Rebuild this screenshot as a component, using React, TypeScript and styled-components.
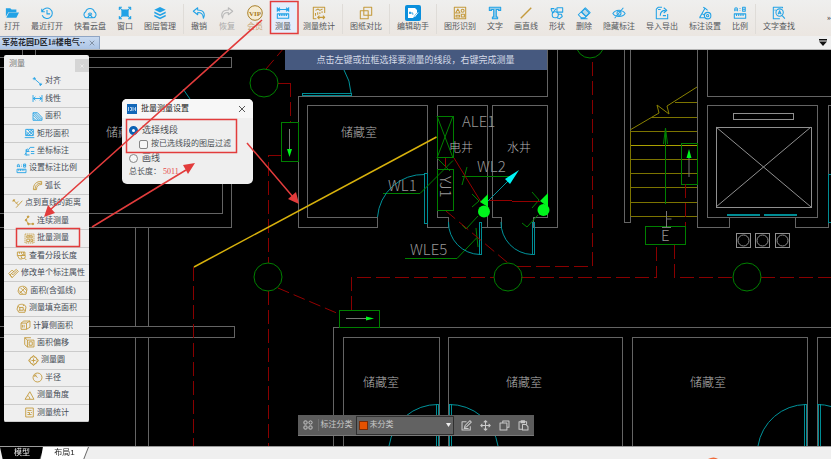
import React from "react";
import styled, { createGlobalStyle } from "styled-components";

const BLUE = "#22a2e6";
const GOLD = "#c49a3c";
const RED = "#e23c3c";

const GlobalStyle = createGlobalStyle`
  * { box-sizing: border-box; }
  body { margin: 0; background: #efefef; overflow: hidden; }
  button, select, input { font: inherit; color: inherit; margin: 0; padding: 0; }
`;

const Page = styled.div`
  position: relative;
  display: flex;
  flex-direction: column;
  min-height: 100vh;
  color: #4c4f55;
  font-family: "Liberation Serif", "Noto Sans CJK SC", sans-serif;
  font-size: 8px;
  line-height: 12px;
`;

/* ---------- icons ---------- */

const glyphs: Record<string, React.ReactNode> = {
  open: (
    <g fill="currentColor" stroke="none">
      <path d="M1 2.500h5L7.500 4H13v3H4L1 12z" />
      <path d="M4.500 7.500H16L13 13.500H1.500z" />
    </g>
  ),
  recent: (
    <>
      <path d="M2.500 6A6 6 0 1 1 2.500 10.500M2 3v3.500h3.500M8 4.500V9h3.500" />
    </>
  ),
  cloud: (
    <>
      <path d="M4.500 13.500A3.700 3.700 0 0 1 3 6.600 5.200 5.200 0 0 1 13 6.600a3.700 3.700 0 0 1-1.500 6.900" />
      <path d="M5 13.500l3-4 3 4zM6 10a2 2 0 0 1 4 0" />
    </>
  ),
  windowFit: (
    <>
      <rect x="4.500" y="4.500" width="7" height="7" fill="currentColor" />
      <path d="M1.500 4.500v-3h3M11.500 1.500h3v3M14.500 11.500v3h-3M4.500 14.500h-3v-3M2 2l3 3M14 2l-3 3M2 14l3-3M14 14l-3-3" />
    </>
  ),
  layers: (
    <g fill="currentColor" stroke="none">
      <path d="M8 1l6.500 3.200L8 7.400 1.500 4.200z" />
      <path d="M1.500 6.200L8 9.400l6.500-3.200v2L8 11.400 1.500 8.200z" />
      <path d="M1.500 10L8 13.200 14.500 10v2L8 15.200 1.500 12z" />
    </g>
  ),
  undo: <path d="M6.500 2L1.500 6l5 4V7.500c4 0 6 1 6.500 6.500 2.500-5 .5-9.500-6.500-9.500z" />,
  redo: <path d="M9.500 2l5 4-5 4V7.500c-4 0-6 1-6.500 6.500C.5 9 2.500 4.500 9.500 4.500z" />,
  measure: (
    <>
      <path d="M1.500 1.500v5M14.500 1.500v5M2 4h12M4.500 2L2 4l2.500 2M11.500 2L14 4l-2.500 2" />
      <path d="M1.500 9h13v5h-13zM4 9v2.500M6 9v2.500M8 9v2.500M10 9v2.500M12 9v2.500" />
    </>
  ),
  stats: (
    <>
      <path d="M5 14.500H1.500v-13h13V8M4 5l3-1.500L9 5l3-1.500M4 11V8M6.500 10V7M9 9V7M11.500 8V6" />
      <path d="M6.500 13h8M8.500 11l-2 2 2 2M12.500 11l2 2-2 2" />
    </>
  ),
  compare: <path d="M5.500 1.500h9v9h-9zM5.500 5.500h-4v9h9v-4M5.500 5.500h5v5" />,
  shapesBox: (
    <>
      <rect x="1.500" y="1.500" width="13" height="13" />
      <path d="M3 8l2.500-4.500L8 8z" />
      <circle cx="11" cy="5.500" r="1.700" />
      <rect x="9.500" y="9.500" width="3.500" height="3" />
      <path d="M3.500 10.500h4v2h-4z" />
    </>
  ),
  text: (
    <path
      fill="currentColor"
      fillOpacity=".45"
      d="M1.500 5V1.500h13V5h-2.500V4H9.500v8.500h1.500v2H5v-2h1.500V4H4v1z"
    />
  ),
  line: <path d="M2 14L14 2" strokeWidth="1.6" />,
  shapes: (
    <>
      <path d="M1 3l2 5 4-5M1 3h4M8 2h6.500v5H8z" />
      <circle cx="6" cy="10" r="3.500" />
      <path d="M9 9.500h4l1 2.500-3 2.500-3-1" />
    </>
  ),
  erase: (
    <>
      <path d="M9.500 2L15 7.500 9 13.500H5L1.500 10zM5 6.500l5.500 5.500M4 14.500h8" />
      <path d="M5 7l4-4 5 5-4 4z" fill="currentColor" fillOpacity=".25" />
    </>
  ),
  hide: (
    <>
      <path d="M1 8.500C4 3.500 12 3.500 15 8.500 12 13 4 13 1 8.500zM13 2L3 14" />
      <circle cx="8" cy="8.300" r="2.300" />
    </>
  ),
  transfer: (
    <>
      <path d="M8 1.500H3.500l-2 2v11h13V9M3.500 4h3" />
      <path d="M6 11c0-4 2-6 6-6M10 2l3.500 3L10 8M9 11h3.500" />
    </>
  ),
  annotate: (
    <>
      <path d="M1.500 13.500h6M2 13L8 2.500 11 5M5 9l3 2M8 2.500L6 1.500" />
      <circle cx="11" cy="11" r="3.700" />
      <circle cx="11" cy="11" r="1.300" />
    </>
  ),
  ratio: (
    <>
      <path d="M2 6V3.500a1.500 1.500 0 0 1 3 0V6M2 4.500h3M8 2.500v.8M8 5v.8M11 1.500h3V6h-3zM11 3.700h3" />
      <path d="M1.500 9h13v5h-13zM4 9v2.500M6.500 9v2.500M9 9v2.500M11.500 9v2.500" />
    </>
  ),
  find: (
    <>
      <path d="M12 2.500v-1H1.500v13H9M3.500 4v1.500" />
      <circle cx="8.700" cy="7.500" r="4.200" />
      <path d="M11.700 11l3 3.500M7 9.500l1.700-4 1.700 4M7.500 8.300h2.400" />
    </>
  ),
  aligned: (
    <>
      <path d="M3 3.500l10 9M1 4.500L4 1.500M11.500 14.500l3-3" />
      <path d="M3 6V3.500h2.500M10.500 12.500H13V10" />
    </>
  ),
  linear: <path d="M1.500 3v10M14.500 3v10M2 8h12M5 5.500L2 8l3 2.500M11 5.500L14 8l-3 2.500" />,
  area: <path d="M1.500 2.500H8l6.500 7v4h-13zM2 6l7 7M2 10l3 3M5 3l9 9M2 3l10 10" />,
  rectArea: <path d="M2.500 2h11v9h-11zM1 14h14M3 5l6 6M3 8l3 3M5 2l8 8M9 2l4 4M3 11l9-9M7 11l6-6" />,
  coord: (
    <>
      <path d="M9 2h6M7 5l2-3M3 5v9M3 8h5M3 13h5M10 8h5M10 11h5M1 13l2-3" />
      <circle cx="5" cy="6" r="1.500" />
    </>
  ),
  arc: <path d="M2 14C2 6 6 2 14 2v4.500C9 6.500 6.500 9 6.500 14zM4.500 14C4.500 7.500 8 4.500 14 4.500" />,
  pointLine: (
    <>
      <path d="M6 14L15 4M2 3l7 7M1 5l3-3" />
      <circle cx="2.500" cy="3.500" r="1" />
      <path d="M6 8l3-3" />
    </>
  ),
  chain: (
    <>
      <path d="M6 2L3 7l3 6h7" />
      <g fill="currentColor">
        <circle cx="6" cy="2.500" r="1.200" />
        <circle cx="3" cy="7.500" r="1.200" />
        <circle cx="6.500" cy="13" r="1.200" />
        <circle cx="13" cy="13" r="1.200" />
      </g>
    </>
  ),
  batch: (
    <>
      <path d="M1.500 1.500h13v13h-13z" strokeDasharray="2 1" />
      <path d="M4 4h8v3H4zM4 9h4v3.500H4zM10 9h2.500v3.500H10zM6 4v1.500M8 4v1.500M10 4v1.500" />
    </>
  ),
  segment: (
    <>
      <path d="M2 3h11v5H2zM5 3v2.500M8 3v2.500M11 3v2.500M2 8l3 5h4" />
      <circle cx="10.500" cy="9.500" r="3" />
      <path d="M12.500 12l2.500 2.500" />
    </>
  ),
  edit: <path d="M1 8l5-5 3 3M3 10l3 4 9-9-3-3zM1 8l5 6M5 8l2 2 6-6" />,
  arcArea: <path d="M3 3.500C7 1 13 1 14.500 6L13 13.500H4L1.500 9zM3 8l5 5M5 4l8 8M9 3l5 5M4 12l9-9" />,
  fillArea: (
    <>
      <path d="M3 3.500C7 1 13 1 14.500 6L13 13.500H4L1.500 9z" />
      <path d="M5.500 6.500h5v4h-5zM3 5l3 2M10 4l2-1M11 10l3 1M4 11l2-1" />
    </>
  ),
  side: <path d="M1.500 4.500h8v9h-8zM1.500 4.500l4-3h9l-5 3M14.500 1.500v9l-5 3M3.500 7v4M6 7v4" />,
  offset: (
    <>
      <path d="M5 4.500h9.500v10H5zM7.500 7h4.500v5H7.500z" />
      <path d="M1 1l4 3.500M1 1v10l4 3.500M1 1h9" />
    </>
  ),
  circleM: (
    <>
      <circle cx="8" cy="8" r="5.500" />
      <path d="M8 .5l3 3M8 .5l-3 3M8 15.500l3-3M8 15.500l-3-3M.5 8l3-3M.5 8l3 3M15.500 8l-3-3M15.500 8l-3 3M5 8h6M8 5v6" />
    </>
  ),
  radius: (
    <>
      <circle cx="8" cy="8" r="6.500" />
      <path d="M8 8L4 4.500M4 7V4.500h2.500" />
    </>
  ),
  angle: <path d="M1.500 13.500L8.500 2.500l6 11zM5 8.500c2 0 3.500 2 3.500 5" />,
  report: <path d="M2.500 1.500h11v13h-11zM5 5h6M5 8h3M10 8h1.500M5 11h6M8 8v3" />,
  grid: (
    <>
      <rect x="1.500" y="1.500" width="5" height="5" rx="1.500" />
      <circle cx="12" cy="4" r="2.600" />
      <rect x="1.500" y="9.500" width="5" height="5" rx="1.500" />
      <rect x="9.500" y="9.500" width="5" height="5" rx="1.500" />
    </>
  ),
  pen: <path d="M8 2.500H1.500v12h12V9M5 11l1-3 7-7 2 2-7 7zM4 12.500h7" />,
  move: <path d="M8 1v14M1 8h14M5.500 3.500L8 1l2.500 2.500M5.500 12.500L8 15l2.500-2.500M3.500 5.500L1 8l2.500 2.500M12.500 5.500L15 8l-2.500 2.500" />,
  copy: <path d="M5.500 4.500v-3h9v9h-3M1.500 4.500h10v10h-10z" />,
  paste: <path d="M6 13.500H1.500v-11h11V6M4.500 1h5v3h-5zM6.500 6.500h5l3 3v5h-8z" />,
  close: <path d="M2 2l12 12M14 2L2 14" />,
};

function Icon({ name, size = 14, weight = 1.2 }: { name: string; size?: number; weight?: number }) {
  return (
    <svg
      width={size}
      height={size}
      viewBox="0 0 16 16"
      fill="none"
      stroke="currentColor"
      strokeWidth={weight}
      strokeLinejoin="round"
      aria-hidden="true"
    >
      {glyphs[name]}
    </svg>
  );
}

/* ---------- top toolbar ---------- */

const Toolbar = styled.header`
  display: flex;
  align-items: stretch;
  height: 36px;
  padding-left: 4px;
  background: linear-gradient(#efefee, #ebe6e1);
  white-space: nowrap;
`;

const Group = styled.div<{ $gap: number }>`
  display: flex;
  gap: ${(p) => p.$gap}px;
`;

const Separator = styled.span`
  width: 1px;
  margin: 4px 7px 2px;
  background: #dfdcd8;
`;

const ToolButton = styled.button<{ $active?: boolean; $ink?: string }>`
  display: flex;
  flex-direction: column;
  align-items: center;
  justify-content: flex-end;
  height: 34px;
  padding: 0 5px 1px;
  margin: 0 -5px;
  border: 0;
  color: ${(p) => p.$ink || "#55585c"};
  background: ${(p) => (p.$active ? "#e4edfb" : "transparent")};
`;

const IconSlot = styled.span<{ $ink: string }>`
  display: flex;
  align-items: center;
  justify-content: center;
  height: 16px;
  color: ${(p) => p.$ink};
`;

const Overflow = styled.button`
  margin-left: auto;
  border: 0;
  background: none;
  color: #333;
`;

const Vip = () => (
  <svg width="16" height="16" viewBox="0 0 16 16" aria-hidden="true">
    <circle cx="8" cy="8" r="7.300" fill="#f5ecd4" stroke="#a9802a" strokeWidth="1" />
    <text x="8" y="11" textAnchor="middle" fontSize="7" fontWeight="700" fill="#a87a1c">VIP</text>
  </svg>
);

const Assistant = () => (
  <svg width="16" height="16" viewBox="0 0 16 16" aria-hidden="true">
    <rect width="16" height="16" rx="2" fill="#0b8fdc" />
    <path d="M3 3h7l2 2v3l-4 5H3z" fill="#fff" />
    <path d="M4.500 9V7h1v2M7 7v2h1.500M9 12l4-5 1 1-4 5z" fill="none" stroke="#0b8fdc" strokeWidth=".8" />
    <path d="M9.500 12l3.500-4.500" stroke="#fff" />
  </svg>
);

type Tool = { label: string; icon: string; tone?: string; ink?: string; active?: boolean };

const toolGroups: { gap: number; tools: Tool[] }[] = [
  {
    gap: 11,
    tools: [
      { label: "打开", icon: "open" },
      { label: "最近打开", icon: "recent" },
      { label: "快看云盘", icon: "cloud" },
      { label: "窗口", icon: "windowFit" },
      { label: "图层管理", icon: "layers" },
    ],
  },
  {
    gap: 12,
    tools: [
      { label: "撤销", icon: "undo" },
      { label: "恢复", icon: "redo", tone: "#b9b9b9", ink: "#aaaaaa" },
      { label: "会员", icon: "vip", ink: "#c9a77a" },
      { label: "测量", icon: "measure", active: true },
      { label: "测量统计", icon: "stats", tone: GOLD },
    ],
  },
  { gap: 12, tools: [{ label: "图纸对比", icon: "compare", tone: GOLD }] },
  { gap: 12, tools: [{ label: "编辑助手", icon: "assistant" }] },
  {
    gap: 11,
    tools: [
      { label: "图形识别", icon: "shapesBox", tone: GOLD },
      { label: "文字", icon: "text" },
      { label: "画直线", icon: "line", tone: GOLD },
      { label: "形状", icon: "shapes" },
      { label: "删除", icon: "erase" },
      { label: "隐藏标注", icon: "hide" },
      { label: "导入导出", icon: "transfer" },
      { label: "标注设置", icon: "annotate" },
      { label: "比例", icon: "ratio" },
    ],
  },
  { gap: 11, tools: [{ label: "文字查找", icon: "find" }] },
];

function ToolIcon({ name }: { name: string }) {
  if (name === "vip") return <Vip />;
  if (name === "assistant") return <Assistant />;
  return <Icon name={name} size={14} />;
}

/* ---------- document tabs ---------- */

const TabStrip = styled.nav`
  display: flex;
  align-items: stretch;
  justify-content: space-between;
  height: 14px;
  border-bottom: 1px solid #b4b4b4;
  background: #efefef;
`;

const DocTab = styled.div`
  display: flex;
  align-items: center;
  gap: 4px;
  width: 100px;
  padding: 0 4px 0 2px;
  border: 1px solid #8fa5c4;
  border-left: 0;
  border-bottom: 0;
  background: linear-gradient(#c9daf0, #abc4e5);
  color: #23272e;
  font-weight: 700;
  white-space: nowrap;
`;

const BareButton = styled.button`
  display: flex;
  align-items: center;
  justify-content: center;
  border: 0;
  background: none;
`;

const StripMenu = styled(BareButton)`
  width: 16px;
  color: #111;
`;

const DocClose = styled(BareButton)`
  margin-left: auto;
  color: #6f7c8e;
`;

/* ---------- workspace ---------- */

const Workspace = styled.main`
  position: relative;
  flex: 1;
  min-height: 396px;
  background: #000;
  overflow: hidden;
`;

const Drawing = styled.svg`
  position: absolute;
  inset: 0;
  font-family: "Liberation Sans Narrow", "Noto Sans CJK SC", sans-serif;
  font-weight: 300;
`;

const Banner = styled.div`
  position: absolute;
  top: 0;
  left: 0;
  right: 0;
  width: 262px;
  margin: 0 auto;
  padding: 4px 0;
  background: #46597f;
  color: #d5dbe8;
  font-size: 9px;
  text-align: center;
  white-space: nowrap;
`;

const Palette = styled.aside`
  position: absolute;
  top: 5px;
  left: 4px;
  width: 85px;
  border-radius: 2px;
  background: #efefef;
  overflow: hidden;
`;

const PaletteHead = styled.div`
  display: flex;
  justify-content: space-between;
  height: 18px;
  padding-left: 5px;
  line-height: 18px;
  color: #777;
`;

const PaletteClose = styled(BareButton)`
  width: 14px;
  height: 13px;
  margin-top: 4px;
  background: #d5d5d5;
  color: #fff;
`;

const PaletteList = styled.ul`
  display: grid;
  grid-template-rows: repeat(20, 1fr);
  height: 349px;
  margin: 0;
  padding: 0;
  list-style: none;
`;

const PaletteItem = styled.button`
  display: flex;
  align-items: center;
  justify-content: center;
  gap: 2px;
  width: 100%;
  height: 100%;
  border: 0;
  border-bottom: 1px solid #cbcbcb;
  background: none;
  color: #454b55;
  white-space: nowrap;
`;

const Tone = styled.span<{ $ink: string }>`
  display: flex;
  color: ${(p) => p.$ink};
`;

const paletteItems: [string, string, string][] = [
  ["对齐", "aligned", BLUE],
  ["线性", "linear", BLUE],
  ["面积", "area", BLUE],
  ["矩形面积", "rectArea", BLUE],
  ["坐标标注", "coord", BLUE],
  ["设置标注比例", "ratio", BLUE],
  ["弧长", "arc", GOLD],
  ["点到直线的距离", "pointLine", GOLD],
  ["连续测量", "chain", GOLD],
  ["批量测量", "batch", GOLD],
  ["查看分段长度", "segment", GOLD],
  ["修改单个标注属性", "edit", GOLD],
  ["面积(含弧线)", "arcArea", GOLD],
  ["测量填充面积", "fillArea", GOLD],
  ["计算侧面积", "side", GOLD],
  ["面积偏移", "offset", GOLD],
  ["测量圆", "circleM", GOLD],
  ["半径", "radius", GOLD],
  ["测量角度", "angle", GOLD],
  ["测量统计", "report", GOLD],
];

const Dialog = styled.section`
  position: absolute;
  top: 49px;
  left: 122px;
  width: 131px;
  border-radius: 5px;
  background: #efefef;
  overflow: hidden;
`;

const DialogTitle = styled.div`
  display: flex;
  align-items: center;
  gap: 4px;
  height: 19px;
  padding: 0 7px 0 5px;
  background: #f7f7f7;
  color: #222;
`;

const DialogClose = styled(BareButton)`
  margin-left: auto;
  color: #444;
`;

const DialogBody = styled.div`
  display: flex;
  flex-direction: column;
  gap: 2px;
  padding: 6px 7px;
`;

const Choice = styled.label<{ $nested?: boolean }>`
  display: flex;
  align-items: center;
  gap: ${(p) => (p.$nested ? 3 : 4)}px;
  padding-left: ${(p) => (p.$nested ? 10 : 0)}px;
  font-size: ${(p) => (p.$nested ? 8 : 9)}px;
  white-space: nowrap;
`;

const Radio = styled.input`
  appearance: none;
  width: 9px;
  height: 9px;
  border: 1px solid #858585;
  border-radius: 50%;
  background: #f6f6f6;
  &:checked {
    border: 3px solid #0a62b4;
    background: #fff;
  }
`;

const Check = styled.input`
  appearance: none;
  width: 9px;
  height: 9px;
  border: 1px solid #858585;
  border-radius: 2px;
  background: #f6f6f6;
`;

const Total = styled.p`
  display: flex;
  gap: 2px;
  margin: 0;
  output { color: #e64a4a; }
`;

const FloatBar = styled.div`
  position: absolute;
  left: 0;
  right: 0;
  bottom: 10px;
  display: flex;
  align-items: center;
  width: 236px;
  height: 21px;
  margin: 0 auto;
  padding: 0 5px;
  border-bottom: 1px solid #7a7a7a;
  background: #5c5c5c;
  color: #c9c9c9;
  white-space: nowrap;
`;

const FloatLabel = styled.label`
  margin: 0 3px 0 5px;
  padding-left: 2px;
  border-left: 1px solid #707070;
`;

const SelectBox = styled.span`
  display: flex;
  align-items: center;
  gap: 2px;
  width: 98px;
  height: 19px;
  padding: 0 2px;
  border: 1px solid #2f2f2f;
  background: #626262;
`;

const Swatch = styled.span`
  width: 9px;
  height: 9px;
  border: 1px solid #7c2d06;
  background: #e65200;
`;

const CategorySelect = styled.select`
  flex: 1;
  min-width: 0;
  border: 0;
  outline: 0;
  appearance: none;
  background: none;
`;

const FloatActions = styled.div`
  display: flex;
  flex: 1;
  justify-content: space-between;
  padding-left: 7px;
`;

/* ---------- bottom sheet tabs ---------- */

const SheetBar = styled.footer`
  display: flex;
  align-items: stretch;
  height: 13px;
  border-top: 1px solid #9b9b9b;
  background: #efefef;
`;

const SheetTabs = styled.div`
  display: flex;
  filter: drop-shadow(1px 0 0 #666);
`;

const SheetTab = styled.button<{ $current?: boolean }>`
  width: ${(p) => (p.$current ? 44 : 47)}px;
  border: 0;
  clip-path: ${(p) =>
    p.$current ? "polygon(0 0, 100% 0, 90% 100%, 6% 100%)" : "polygon(4% 0, 100% 0, 90% 100%, 0 100%)"};
  margin-right: ${(p) => (p.$current ? -3 : 0)}px;
  background: ${(p) => (p.$current ? "#000" : "#fff")};
  color: ${(p) => (p.$current ? "#eee" : "#222")};
  font-family: "Liberation Sans", "Noto Sans CJK SC", sans-serif;
  line-height: 12px;
`;

/* ---------- annotations over the page ---------- */

const Markup = styled.svg`
  position: absolute;
  top: 0;
  left: 0;
  pointer-events: none;
`;

function Plan() {
  return (
    <Drawing width="831" height="396" viewBox="0 50 831 396" aria-label="平面图">
      <g fill="none" strokeWidth="1" shapeRendering="crispEdges">
        <g stroke="#646464">
          <path d="M22 50V55M35 50V55M0 57.500H231V67.500H0M0 213.500H222V183M231.500 183V227.500H0" />
          <path d="M135.500 227V326.500M148.500 227V326.500M0 326.500H234.500V337.500H0M135.500 337V446M148.500 337V446" />
          <path d="M547.500 50V96.500H298.500V227.500H377.500V217.500H307.500V105.500H427.500V227.500H448.500V217.500H437.500V105.500H487.500V227.500H481" />
          <path d="M557.500 50V227.500H533.500V217.500H547.500V105.500H492.500V217.500H501.500V227.500H487" />
          <path d="M624.500 50V222.500H630.500V50M697.500 50V227.500H729.500V217.500H707.500V105.500H817.500V217.500H795.500V227.500H828.500V105.500H831M707.500 50V96.500H831M795 217.500H729" />
          <path d="M333.500 446V327.500H831M343.500 446V337.500H439.500V446M448.500 446V337.500H622.500V446M632.500 446V337.500H807.500V446M817.500 446V337.500H831" />
        </g>
        <path stroke="#909090" d="M733.500 113.500h60v6h-60zM716.500 127.500h94.500v80h-94.500zM736.500 233.500h14v14h-14zM755.500 233.500h14v14h-14zM775.500 233.500h14v14h-14z" />
        <g stroke="#7c7400">
          <path d="M630.500 131.500H697M630.500 159.500H697M630.500 173.500H697M630.500 187.500H697M630.500 202.500H697M630.500 216.500H697M652 117.500H697M675 102.500H697M630.500 131V216" />
          <path stroke="#aaa000" d="M630.500 145.500H697" />
        </g>
        <g stroke="#007f00">
          <path d="M281.500 122.500h17v39h-17zM437.500 116.500h16v41h-16zM437.500 169.500h16v41h-16zM339.500 310.500h40v17h-40zM645.500 226.500h40v18h-40zM681.500 143.500h16v41h-16zM665.500 144V204M462 176.500H511" />
        </g>
        <g stroke="#890000">
          <path d="M278 83.500h12" />
          <path strokeDasharray="14 5" d="M290.500 83V122M281 155.500H268.500V263M268.500 291V446M193.500 267V446M351.500 310V277.500H494M521 277.500H656.500V245M517 266.500H592.500V58M674.500 245V277.500H733M761 277.500H831M685.500 184V226" />
        </g>
        <path stroke="#008c94" d="M302.500 93.500h49v2h-49zM424.500 173.500h3v50h-3zM479.500 222.500h2v32h-2zM532.500 222.500h2v32h-2zM828.500 174.500h3v48h-3zM436.500 404v42M438.500 404v42M449.500 404v42M451.500 404v42M804.500 404v42M806.500 404v42M818.500 404v42M820.500 404v42" />
        <path stroke="#008c94" strokeWidth="2" d="M727 215h33M764 215h33" />
      </g>

      <g fill="none" strokeWidth="1">
        <g stroke="#909090">
          <path d="M716 127l95 80M811 127l-95 80" />
          <circle cx="743.500" cy="240.500" r="5.500" />
          <circle cx="762.500" cy="240.500" r="5.500" />
          <circle cx="782.500" cy="240.500" r="5.500" />
        </g>
        <path stroke="#8a8200" d="M630 130l29-17-2-8 12 9-2-8 30-19" />
        <g stroke="#008000">
          <circle cx="264" cy="83" r="14" />
          <circle cx="268" cy="277" r="14" />
          <circle cx="508" cy="277" r="14" />
          <circle cx="747" cy="277" r="14" />
          <circle cx="590" cy="44" r="14" />
          <path d="M437 116l16 42M453 116l-16 42M437 158l13 13M383 193.500h37l33-33M467 167l-5 18M405 258.500h52l20-21M476 228l2 19M472 194l7 7-7 6M478 216l-12 13-4-4M532 192l7 8-7 8M538 215l-11 12-5-4M665.500 128l-2 16M665.500 128l2 16M665.500 131V144" />
        </g>
        <g stroke="#940000">
          <path strokeDasharray="12 5" d="M266 69l18-21M278 288l61 26M446 211l62 52" />
          <path d="M454 158l27 44M488 200.500h24M512 201.500h28M445.500 158v9" />
        </g>
        <g stroke="#00939b">
          <path d="M351 93A50 50 0 0 0 344 70M377.500 217A46 46 0 0 1 425 174.500M448.500 222A32 32 0 0 0 480 254.500M501 222A32 32 0 0 0 532 254.500M488 201l20-20" />
          <path d="M389 446A49 49 0 0 1 438 404.500M449 404.500A49 49 0 0 1 498 446M758 446A49 49 0 0 1 806 404.500M817 404.500q8 0 14 2M183 89l7 10" />
        </g>
        <path stroke="#777" d="M289.500 129v20M346 318.500h20M689 158v19M662 227.500h9M666.500 211v16M666.500 219h5" />
      </g>
      <g fill="#00f51c">
        <path d="M287 149h5l-2.500 8zM366 316.500l8 2-8 2zM686.500 158l2.500-9 2.500 9zM480 202l8-8v13zM540 201l8-8v14z" />
        <circle cx="484" cy="211.500" r="6" />
        <circle cx="543.500" cy="210" r="6" />
      </g>
      <path fill="#00f5f5" d="M519 170l-9 14-5-5z" />
      <path stroke="#d8b20c" strokeWidth="1.500" d="M194 267L436.500 137" />

      <g fill="#b4b4b4" fontSize="12">
        <text x="106" y="137">储藏室</text>
        <text x="341" y="137">储藏室</text>
        <text x="363" y="387">储藏室</text>
        <text x="506" y="387">储藏室</text>
        <text x="690" y="387">储藏室</text>
        <text x="449" y="152">电井</text>
        <text x="507" y="152">水井</text>
      </g>
      <g fill="#969696" fontSize="15">
        <text x="462" y="127">ALE1</text>
        <text x="388" y="191">WL1</text>
        <text x="477" y="172">WL2</text>
        <text x="410" y="255">WLE5</text>
        <text x="661" y="241">E</text>
        <text transform="translate(440 176) rotate(90)">YJ1</text>
      </g>
    </Drawing>
  );
}

export default function App() {
  return (
    <Page>
      <GlobalStyle />
      <Toolbar>
        {toolGroups.map((group, i) => (
          <React.Fragment key={i}>
            {i > 0 && <Separator />}
            <Group $gap={group.gap}>
              {group.tools.map((t) => (
                <ToolButton key={t.label} type="button" $active={t.active} $ink={t.ink}>
                  <IconSlot $ink={t.tone || BLUE}>
                    <ToolIcon name={t.icon} />
                  </IconSlot>
                  {t.label}
                </ToolButton>
              ))}
            </Group>
          </React.Fragment>
        ))}
        <Overflow type="button" aria-label="更多">»</Overflow>
      </Toolbar>

      <TabStrip>
        <DocTab>
          军苑花园D区1#楼电气··
          <DocClose type="button" aria-label="关闭">
            <Icon name="close" size={6} weight={2} />
          </DocClose>
        </DocTab>
        <StripMenu type="button" aria-label="列表">
          <svg width="8" height="8" viewBox="0 0 8 8" fill="currentColor" aria-hidden="true">
            <path d="M0 0h8v1.500H0zM0 2.500h8L4 7z" />
          </svg>
        </StripMenu>
      </TabStrip>

      <Workspace>
        <Plan />
        <Banner>点击左键或拉框选择要测量的线段，右键完成测量</Banner>

        <Palette>
          <PaletteHead>
            测量
            <PaletteClose type="button" aria-label="关闭">
              <Icon name="close" size={4} weight={2} />
            </PaletteClose>
          </PaletteHead>
          <PaletteList>
            {paletteItems.map(([label, icon, ink]) => (
              <li key={label}>
                <PaletteItem type="button">
                  <Tone $ink={ink}>
                    <Icon name={icon} size={11} weight={1.3} />
                  </Tone>
                  {label}
                </PaletteItem>
              </li>
            ))}
          </PaletteList>
        </Palette>

        <Dialog role="dialog" aria-label="批量测量设置">
          <DialogTitle>
            <svg width="10" height="10" viewBox="0 0 10 10" aria-hidden="true">
              <rect width="10" height="10" fill="#1267b8" />
              <path d="M1.500 3v4M3 3.500h1.500v3H3M6 3v4M8.500 3v4M7 5h1.500" stroke="#d7e9fa" strokeWidth=".8" fill="none" />
            </svg>
            批量测量设置
            <DialogClose type="button" aria-label="关闭">
              <Icon name="close" size={8} weight={1.8} />
            </DialogClose>
          </DialogTitle>
          <DialogBody>
            <Choice>
              <Radio type="radio" name="mode" defaultChecked />
              选择线段
            </Choice>
            <Choice $nested>
              <Check type="checkbox" />
              按已选线段的图层过滤
            </Choice>
            <Choice>
              <Radio type="radio" name="mode" />
              画线
            </Choice>
            <Total>
              总长度：<output>5011</output>
            </Total>
          </DialogBody>
        </Dialog>

        <FloatBar>
          <Icon name="grid" size={10} weight={1.6} />
          <FloatLabel htmlFor="category">标注分类</FloatLabel>
          <SelectBox>
            <Swatch />
            <CategorySelect id="category" defaultValue="none">
              <option value="none">未分类</option>
            </CategorySelect>
            <svg width="5" height="4" viewBox="0 0 5 4" fill="#eee" aria-hidden="true">
              <path d="M0 0h5L2.500 4z" />
            </svg>
          </SelectBox>
          <FloatActions>
            {[
              ["pen", "编辑"],
              ["move", "移动"],
              ["copy", "复制"],
              ["paste", "粘贴"],
            ].map(([icon, label]) => (
              <BareButton key={icon} type="button" aria-label={label}>
                <Icon name={icon} size={11} weight={1.5} />
              </BareButton>
            ))}
          </FloatActions>
        </FloatBar>
      </Workspace>

      <SheetBar>
        <SheetTabs>
          <SheetTab type="button" $current>模型</SheetTab>
          <SheetTab type="button">布局1</SheetTab>
        </SheetTabs>
      </SheetBar>

      <Markup width="831" height="459" viewBox="0 0 831 459" aria-hidden="true">
        <g fill="none" stroke={RED} strokeWidth="1.500">
          <path d="M270.500 1.500h27.500v32h-27.500zM16.500 228.500h63v18h-63zM126.500 119.500h110v33h-110z" />
          <path d="M262 20L50 210M92 227l94-57M247 143l46 54" />
        </g>
        <path fill={RED} d="M44 217l4-12 7 8zM195 163l-12 2 5 9zM299 204l-11-5 8-7z" />
        <path fill="#ef6a3a" d="M708 459q6-3 10 0z" />
      </Markup>
    </Page>
  );
}
